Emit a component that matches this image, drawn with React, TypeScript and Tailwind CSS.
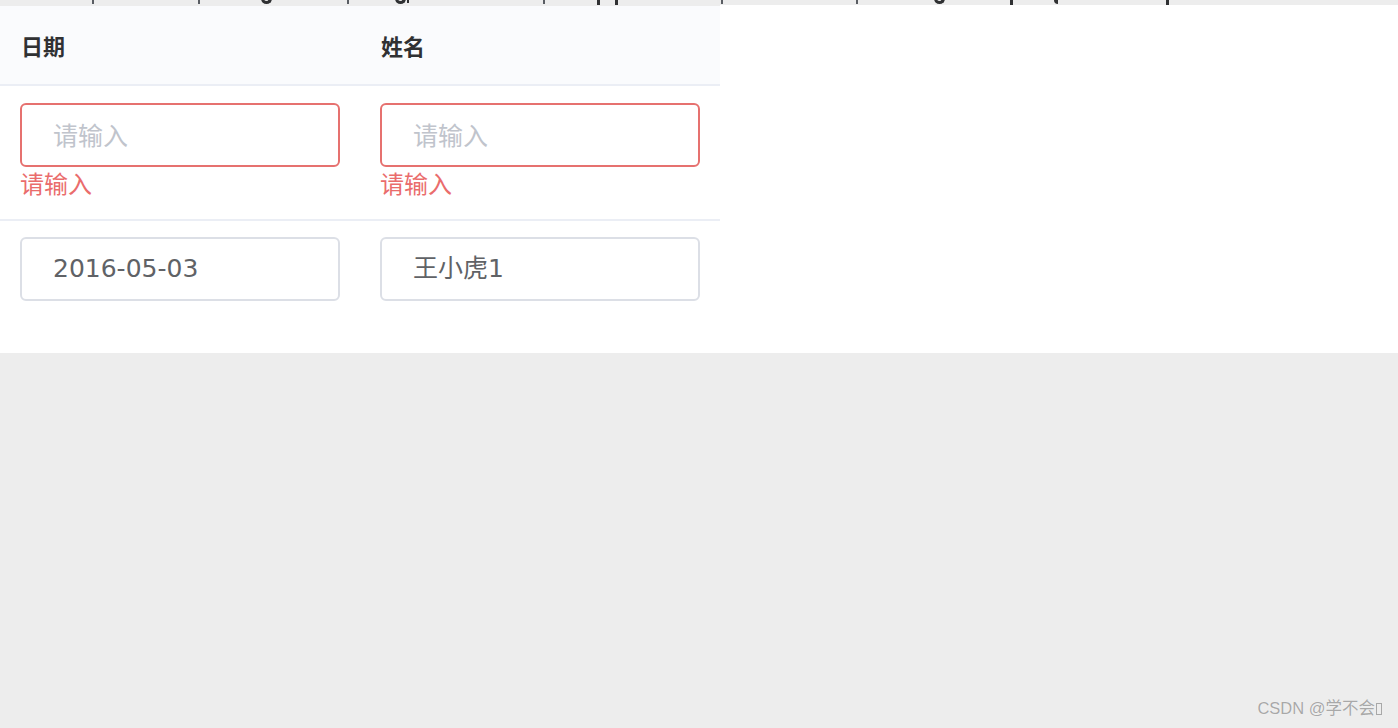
import React from 'react';

const font = "font-['DejaVu_Sans','Noto_Sans_CJK_SC',sans-serif]";
const cjk = "font-['Noto_Sans_CJK_SC',sans-serif]";

// bottoms of a cut-off text line above the table
const Marks: React.FC = () => (
  <div className="flex h-[5px] items-start overflow-hidden bg-[#ededed]">
    <span className="ml-[92px] h-[4px] w-[2px] shrink-0 bg-[#5a5d63]" />
    <span className="ml-[104px] h-[4px] w-[2px] shrink-0 bg-[#5a5d63]" />
    <span className="ml-[61px] -mt-[3px] h-[7px] w-[11px] shrink-0 rounded-b-full border-x-[3px] border-b-[3px] border-[#303133]" />
    <span className="ml-[75px] h-[4px] w-[2px] shrink-0 bg-[#5a5d63]" />
    <span className="ml-[46px] -mt-[3px] h-[7px] w-[11px] shrink-0 rounded-b-full border-x-[3px] border-b-[3px] border-[#303133]" />
    <span className="ml-[1px] h-[3px] w-[2px] shrink-0 bg-[#303133]" />
    <span className="ml-[134px] h-[4px] w-[2px] shrink-0 bg-[#5a5d63]" />
    <span className="ml-[52px] h-[5px] w-[3px] shrink-0 bg-[#303133]" />
    <span className="ml-[15px] h-[5px] w-[3px] shrink-0 bg-[#303133]" />
    <span className="ml-[103px] h-[4px] w-[2px] shrink-0 bg-[#5a5d63]" />
    <span className="ml-[133px] h-[4px] w-[2px] shrink-0 bg-[#5a5d63]" />
    <span className="ml-[76px] -mt-[3px] h-[7px] w-[11px] shrink-0 rounded-b-full border-x-[3px] border-b-[3px] border-[#303133]" />
    <span className="ml-[65px] h-[5px] w-[3px] shrink-0 bg-[#303133]" />
    <span className="ml-[41px] h-[4px] w-[4px] shrink-0 rounded-bl-full bg-[#303133]" />
    <span className="ml-[108px] h-[5px] w-[3px] shrink-0 bg-[#303133]" />
  </div>
);

const Field: React.FC<{ value?: string; placeholder?: string; error?: boolean }> = ({ value, placeholder, error }) => (
  <div
    className={
      error
        ? 'flex h-[64px] w-[320px] items-center rounded-[6px] border-2 border-[#e6716f] bg-white px-[31px]'
        : 'flex h-[64px] w-[320px] items-center rounded-[6px] border-2 border-[#dcdfe6] bg-white px-[31px]'
    }
  >
    {value ? (
      <span className="text-[25px] text-[#606266]">{value}</span>
    ) : (
      <span className={`text-[25px] text-[#c0c4cc] ${cjk}`}>{placeholder}</span>
    )}
  </div>
);

const App: React.FC = () => {
  return (
    <div className={`flex h-screen flex-col bg-[#ededed] ${font}`}>
      <Marks />
      <div className="bg-white">
        <div className="w-[720px] border-t border-[#ededed]">
          <div className={`grid h-[80px] grid-cols-2 border-b-2 border-[#ebeef5] bg-[#fafbfd] ${cjk}`}>
            <div className="flex items-center px-[21px] text-[22px] font-bold text-[#303133]">日期</div>
            <div className="flex items-center px-[21px] text-[22px] font-bold text-[#303133]">姓名</div>
          </div>

          <div className="grid grid-cols-2 border-b-2 border-[#ebeef5] pt-[17px] pb-[20px]">
            {[0, 1].map((i) => (
              <div key={i} className="px-[20px]">
                <Field placeholder="请输入" error />
                <div className={`text-[24px] leading-[32px] text-[#ea6c6c] ${cjk}`}>请输入</div>
              </div>
            ))}
          </div>

          <div className="grid grid-cols-2 pt-[16px] pb-[52px]">
            <div className="px-[20px]">
              <Field value="2016-05-03" />
            </div>
            <div className="px-[20px]">
              <Field value="王小虎1" />
            </div>
          </div>
        </div>
      </div>

      <div className="flex flex-1 items-end justify-end pr-[16px] pb-[7px]">
        <span className="flex items-center font-['Liberation_Sans','Noto_Sans_CJK_SC',sans-serif] text-[16.5px] text-[#a8a8a8] [text-shadow:0_0_1px_#ffffff]">
          CSDN @学不会
          <span className="ml-[1px] inline-block h-[12px] w-[6px] border border-[#a8a8a8]" />
        </span>
      </div>
    </div>
  );
};

export default App;
